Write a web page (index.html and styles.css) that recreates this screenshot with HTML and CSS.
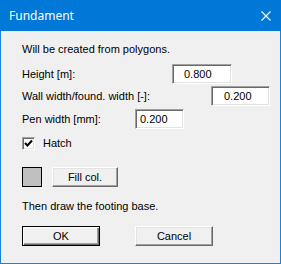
FILE: index.html
```html
<!DOCTYPE html>
<html>
<head>
<meta charset="utf-8">
<link rel="stylesheet" href="styles.css">
</head>
<body>
<div class="dialog">
  <div class="titlebar">
    <span class="title">Fundament</span>
    <svg class="close" width="10" height="10" viewBox="0 0 10 10"><path d="M0.5 0.5 L9.5 9.5 M9.5 0.5 L0.5 9.5" stroke="#fff" stroke-width="1.1" fill="none"/></svg>
  </div>
  <div class="content">
    <div class="text t1">Will be created from polygons.</div>
    <div class="row r1"><span class="label l1">Height [m]:</span><span class="edit e1">0.800</span></div>
    <div class="row r2"><span class="label l2">Wall width/found. width [-]:</span><span class="edit e2">0.200</span></div>
    <div class="row r3"><span class="label l3">Pen width [mm]:</span><span class="edit e3">0.200</span></div>
    <div class="row r4">
      <span class="check"><svg width="9" height="9" viewBox="0 0 9 9"><path d="M1 4 L3.5 6.5 L8 1.5" stroke="#000" stroke-width="2" fill="none"/></svg></span>
      <span class="label">Hatch</span>
    </div>
    <div class="row r5">
      <span class="swatch"></span>
      <span class="btn fill">Fill col.</span>
    </div>
    <div class="text t2">Then draw the footing base.</div>
    <div class="row r6">
      <span class="btn ok">OK</span>
      <span class="btn cancel">Cancel</span>
    </div>
  </div>
</div>
</body>
</html>
```
FILE: styles.css
```css
html, body { margin: 0; padding: 0; }
body { background: #f0f0f0; font-family: "Liberation Sans", Arial, sans-serif; font-size: 11px; color: #000; }
.dialog { width: 281px; height: 264px; box-sizing: border-box; display: flex; flex-direction: column; }
.titlebar { height: 31px; background: #0078d7; display: flex; align-items: center; padding: 0 10px 0 9px; box-sizing: border-box; }
.title { font-family: "Noto Sans", "Open Sans", sans-serif; font-size: 12px; color: #fff; flex: 1; padding-bottom: 1px; }
.close { display: block; margin-top: 0px; }
.content { flex: 1; border: 1px solid #1a82d7; border-top: none; background: #f0f0f0; padding: 12px 0 0 21px; display: flex; flex-direction: column; }
.text { line-height: 13px; height: 13px; }
.row { display: flex; align-items: center; }
.r1 { margin-top: 8px; }
.r2 { margin-top: 2px; }
.r3 { margin-top: 3px; }
.r4 { margin-top: 8px; }
.r5 { margin-top: 17px; }
.t2 { margin-top: 13px; }
.r6 { margin-top: 13px; }
.label { line-height: 13px; white-space: nowrap; }
.l1 { width: 150px; }
.l2 { width: 189px; }
.l3 { width: 113px; }
.edit { display: block; height: 20px; box-sizing: border-box; background: #fff; border-style: solid; border-width: 1px; border-color: #a0a0a0 #fff #fff #a0a0a0; box-shadow: inset 1px 1px 0 #696969, inset -1px -1px 0 #e3e3e3; line-height: 18px; padding-left: 11px; }
.e1 { width: 60px; }
.e2 { width: 59px; padding-left: 12px; }
.e3 { width: 49px; padding-left: 4px; }
.check { width: 13px; height: 13px; box-sizing: border-box; background: #fff; border-style: solid; border-width: 1px; border-color: #a0a0a0 #fff #fff #a0a0a0; box-shadow: inset 1px 1px 0 #696969, inset -1px -1px 0 #e3e3e3; display: flex; align-items: center; justify-content: center; margin-right: 8px; }
.check svg { display: block; }
.swatch { width: 20px; height: 20px; box-sizing: border-box; border: 1px solid #000; background: #c0c0c0; margin-right: 10px; }
.btn { display: flex; align-items: center; justify-content: center; box-sizing: border-box; background: #f0f0f0; border-style: solid; border-width: 1px; border-color: #fff #696969 #696969 #fff; box-shadow: inset -1px -1px 0 #a0a0a0, inset 1px 1px 0 #e3e3e3; height: 20px; }
.fill { width: 66px; margin-top: -1px; }
.ok { width: 78px; border-color: #000; box-shadow: inset 1px 1px 0 #fff, inset -1px -1px 0 #696969, inset -2px -2px 0 #a0a0a0; }
.cancel { width: 78px; margin-left: 35px; }
```
